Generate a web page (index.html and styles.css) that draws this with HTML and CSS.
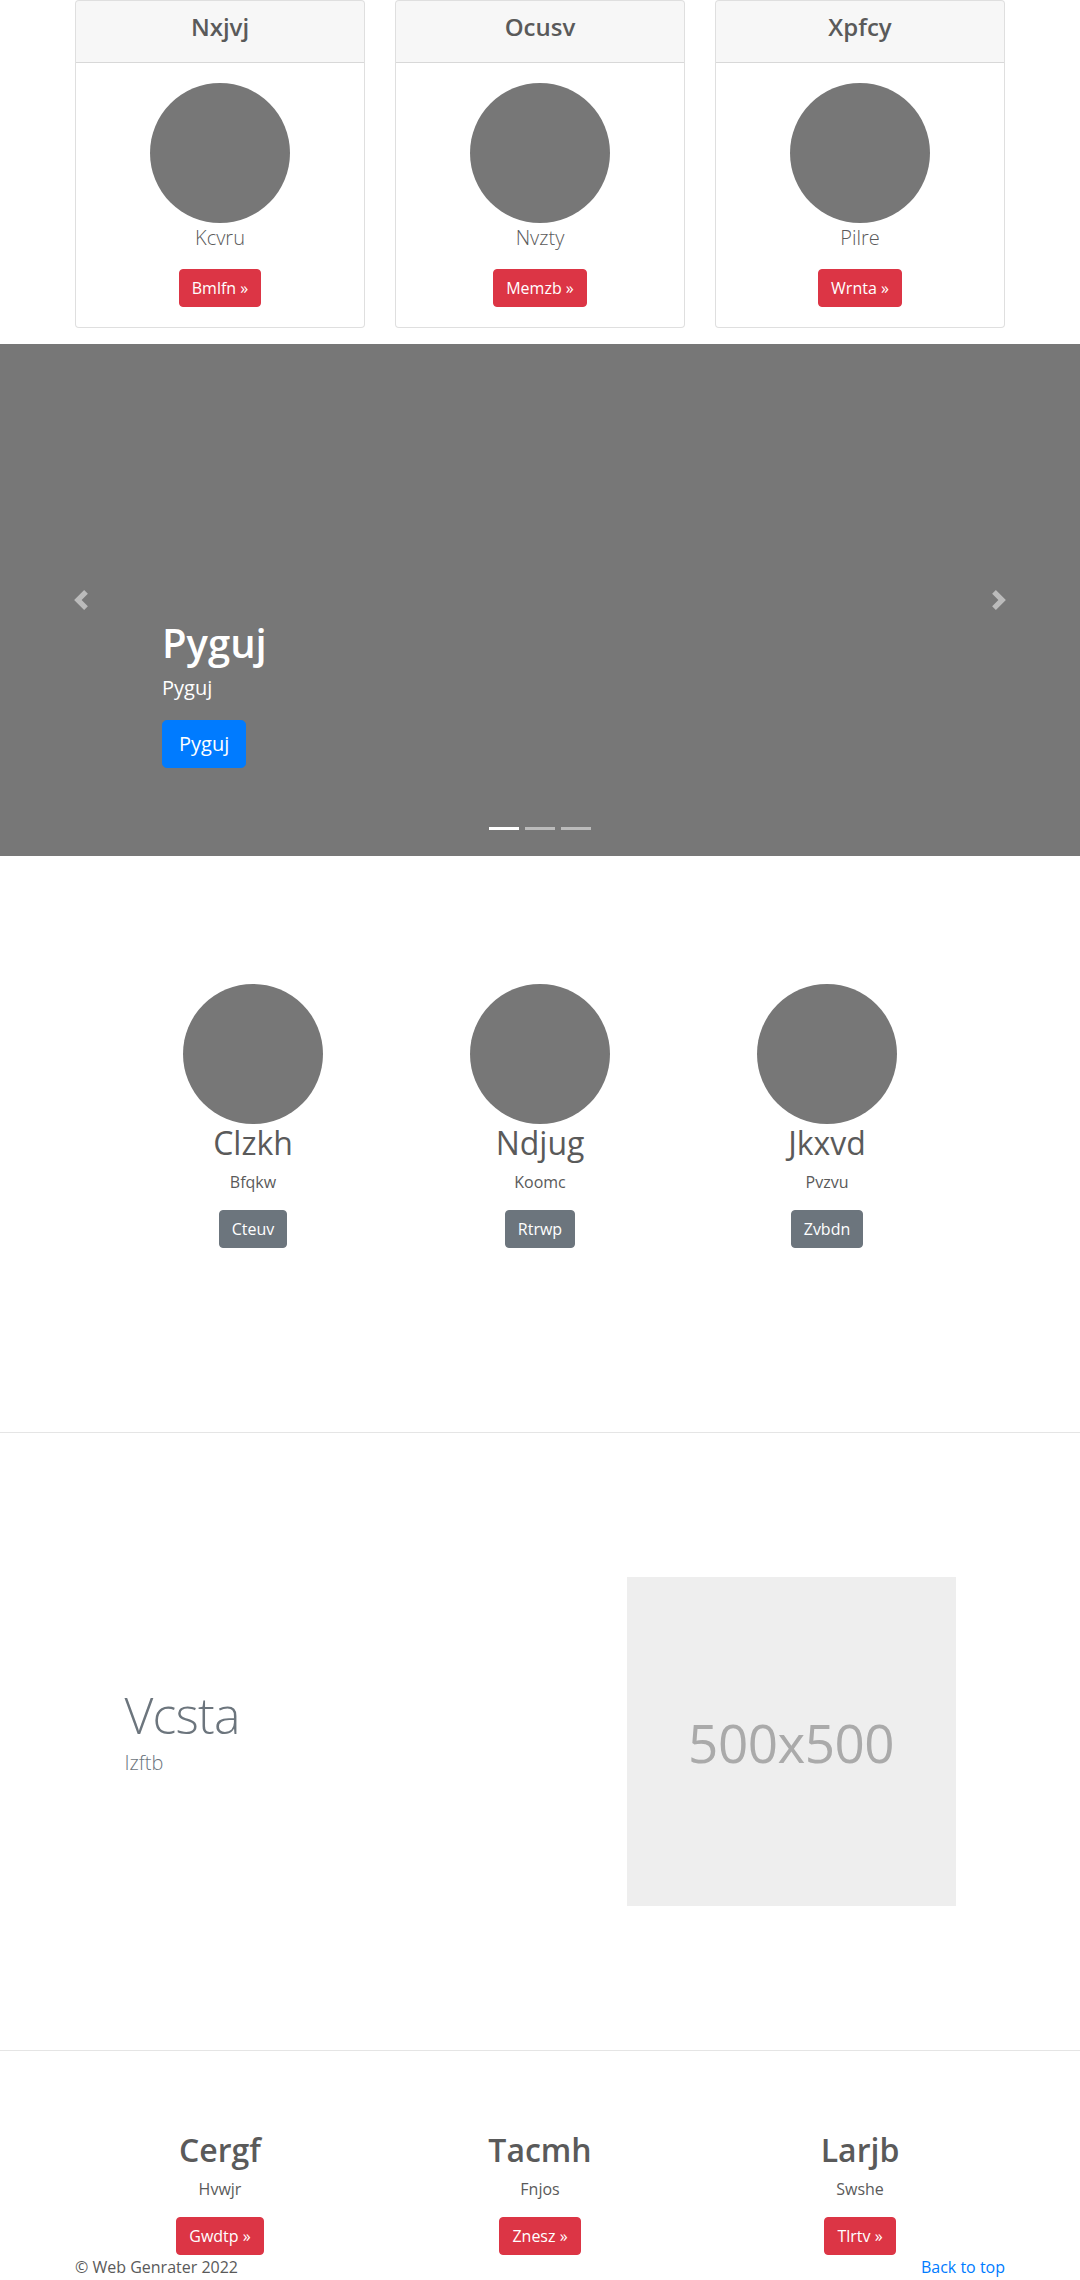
FILE: index.html
```html
<!DOCTYPE html>
<html lang="en">
<head>
<meta charset="utf-8">
<title>Page</title>
<link rel="stylesheet" href="styles.css">
</head>
<body>
<div class="container">
  <div class="row-three cards">
    <div class="card">
      <div class="card-header"><h4 class="card-title">Nxjvj</h4></div>
      <div class="card-body">
        <div class="circle"></div>
        <p class="lead">Kcvru</p>
        <a class="btn btn-danger" href="#">Bmlfn »</a>
      </div>
    </div>
    <div class="card">
      <div class="card-header"><h4 class="card-title">Ocusv</h4></div>
      <div class="card-body">
        <div class="circle"></div>
        <p class="lead">Nvzty</p>
        <a class="btn btn-danger" href="#">Memzb »</a>
      </div>
    </div>
    <div class="card">
      <div class="card-header"><h4 class="card-title">Xpfcy</h4></div>
      <div class="card-body">
        <div class="circle"></div>
        <p class="lead">Pilre</p>
        <a class="btn btn-danger" href="#">Wrnta »</a>
      </div>
    </div>
  </div>
</div>

<div class="carousel">
  <ol class="indicators">
    <li class="active"></li>
    <li></li>
    <li></li>
  </ol>
  <a class="control control-prev" href="#">
    <svg class="control-icon" viewBox="0 0 8 8" width="20" height="20"><path fill="#fff" d="M5.25 0l-4 4 4 4 1.5-1.5L4.25 4l2.5-2.5L5.25 0z"/></svg>
  </a>
  <a class="control control-next" href="#">
    <svg class="control-icon" viewBox="0 0 8 8" width="20" height="20"><path fill="#fff" d="M2.75 0l-1.5 1.5L3.75 4l-2.5 2.5L2.75 8l4-4-4-4z"/></svg>
  </a>
  <div class="caption">
    <h1 class="caption-title">Pyguj</h1>
    <p class="caption-text">Pyguj</p>
    <div class="caption-action"><a class="btn btn-lg btn-primary" href="#">Pyguj</a></div>
  </div>
</div>

<section class="marketing">
  <div class="mk-row">
    <div class="mk-col">
      <div class="circle"></div>
      <h2 class="mk-title">Clzkh</h2>
      <p class="mk-text">Bfqkw</p>
      <div class="mk-action"><a class="btn btn-secondary" href="#">Cteuv</a></div>
    </div>
    <div class="mk-col">
      <div class="circle"></div>
      <h2 class="mk-title">Ndjug</h2>
      <p class="mk-text">Koomc</p>
      <div class="mk-action"><a class="btn btn-secondary" href="#">Rtrwp</a></div>
    </div>
    <div class="mk-col">
      <div class="circle"></div>
      <h2 class="mk-title">Jkxvd</h2>
      <p class="mk-text">Pvzvu</p>
      <div class="mk-action"><a class="btn btn-secondary" href="#">Zvbdn</a></div>
    </div>
  </div>
</section>

<hr class="divider">

<section class="featurette">
  <div class="feat-row">
    <div class="feat-text">
      <h2 class="feat-heading">Vcsta</h2>
      <p class="lead muted">Izftb</p>
    </div>
    <div class="feat-media">
      <svg class="feat-img" viewBox="0 0 500 500" preserveAspectRatio="xMidYMid slice">
        <rect width="100%" height="100%" fill="#eee"/>
      </svg>
      <span class="feat-img-label">500x500</span>
    </div>
  </div>
</section>

<hr class="divider">

<section class="container">
  <div class="row-three bottom">
    <div class="b-col">
      <h2 class="b-title">Cergf</h2>
      <p class="b-text">Hvwjr</p>
      <a class="btn btn-danger" href="#">Gwdtp »</a>
    </div>
    <div class="b-col">
      <h2 class="b-title">Tacmh</h2>
      <p class="b-text">Fnjos</p>
      <a class="btn btn-danger" href="#">Znesz »</a>
    </div>
    <div class="b-col">
      <h2 class="b-title">Larjb</h2>
      <p class="b-text">Swshe</p>
      <a class="btn btn-danger" href="#">Tlrtv »</a>
    </div>
  </div>
</section>

<footer class="container footer">
  <p class="copy">© Web Genrater 2022</p>
  <p class="back"><a href="#">Back to top</a></p>
</footer>
</body>
</html>
```

FILE: styles.css
```css
* { box-sizing: border-box; }

html, body {
  margin: 0;
  padding: 0;
}

body {
  font-family: "Open Sans", "Noto Sans", "Liberation Sans", sans-serif;
  font-size: 16px;
  line-height: 1.5;
  color: #5a5a5a;
  background: #fff;
}

a { text-decoration: none; }

p { margin: 0; }

h1, h2, h4 { margin: 0; }

.container {
  width: 960px;
  margin: 0 auto;
  padding: 0 15px;
}

.row-three {
  display: grid;
  grid-template-columns: repeat(3, 1fr);
  column-gap: 30px;
}

/* ---------- cards ---------- */
.cards { margin-bottom: 16px; }

.card {
  border: 1px solid rgba(0, 0, 0, .125);
  border-radius: 4px;
  background: #fff;
  text-align: center;
}

.card-header {
  background: rgba(0, 0, 0, .03);
  border-bottom: 1px solid rgba(0, 0, 0, .125);
  padding: 12px 20px;
  border-radius: 3px 3px 0 0;
}

.card-title {
  font-size: 24px;
  line-height: 1.2;
  font-weight: 600;
  margin-bottom: 8px;
}

.card-body { padding: 20px; }

.circle {
  width: 140px;
  height: 140px;
  border-radius: 50%;
  background: #777;
  margin: 0 auto;
}

.lead {
  font-size: 20px;
  font-weight: 300;
  line-height: 1.5;
  margin-bottom: 16px;
}

.muted { color: #6c757d; }

/* ---------- buttons ---------- */
.btn {
  display: inline-block;
  vertical-align: top;
  font-size: 16px;
  line-height: 1.5;
  padding: 6px 12px;
  border: 1px solid transparent;
  border-radius: 4px;
  color: #fff;
  font-weight: 400;
}

.btn-danger { background: #dc3545; border-color: #dc3545; }
.btn-secondary { background: #6c757d; border-color: #6c757d; }
.btn-primary { background: #007bff; border-color: #007bff; }

.btn-lg {
  font-size: 20px;
  padding: 8px 16px;
  border-radius: 4.8px;
}

/* ---------- carousel ---------- */
.carousel {
  position: relative;
  height: 512px;
  background: #777;
  margin-bottom: 64px;
}

.indicators {
  position: absolute;
  left: 0;
  right: 0;
  bottom: 16px;
  margin: 0;
  padding: 0;
  list-style: none;
  display: flex;
  justify-content: center;
  z-index: 2;
}

.indicators li {
  width: 30px;
  height: 3px;
  margin: 10px 3px;
  background: #fff;
  opacity: .5;
}

.indicators li.active { opacity: 1; }

.control {
  position: absolute;
  top: 0;
  bottom: 0;
  width: 15%;
  display: flex;
  align-items: center;
  justify-content: center;
  z-index: 1;
}

.control-prev { left: 0; }
.control-next { right: 0; }

.control-icon { opacity: .5; display: block; }

.caption {
  position: absolute;
  left: 15%;
  right: 15%;
  bottom: 88px;
  color: #fff;
  text-align: left;
  z-index: 3;
}

.caption-title {
  font-size: 40px;
  line-height: 1.2;
  font-weight: 600;
  margin-bottom: 6px;
}

.caption-text {
  font-size: 20px;
  line-height: 1.5;
  margin-bottom: 17px;
}

/* ---------- marketing ---------- */
.marketing { padding: 64px 0; }

.mk-row {
  width: 861px;
  margin: 0 auto;
  display: grid;
  grid-template-columns: repeat(3, 1fr);
}

.mk-col {
  padding: 0 15px;
  margin-bottom: 24px;
  text-align: center;
}

.mk-title {
  font-size: 32px;
  line-height: 1.2;
  font-weight: 400;
  margin-bottom: 8px;
}

.mk-text { margin: 0 12px 16px; }

.mk-action { margin-bottom: 16px; }

/* ---------- divider ---------- */
.divider {
  margin: 80px 0;
  border: 0;
  border-top: 1px solid rgba(0, 0, 0, .1);
  height: 0;
}

/* ---------- featurette ---------- */
.featurette { padding: 64px 0; }

.feat-row {
  width: 861px;
  margin: 0 auto;
  display: grid;
  grid-template-columns: 7fr 5fr;
  align-items: center;
}

.feat-text { padding: 0 15px; }

.feat-heading {
  font-size: 50px;
  line-height: 1;
  font-weight: 300;
  letter-spacing: -0.8px;
  color: #6c757d;
  margin-bottom: 8px;
}

.feat-media {
  margin: 0 15px;
  position: relative;
  aspect-ratio: 1 / 1;
  background: #eee;
}

.feat-img {
  display: block;
  width: 100%;
  height: 100%;
}

.feat-img-label {
  position: absolute;
  left: 0;
  right: 0;
  top: 50%;
  transform: translateY(-50%);
  text-align: center;
  font-size: 53px;
  line-height: 1;
  letter-spacing: -0.5px;
  color: #aaa;
}

/* ---------- bottom columns ---------- */
.b-col { text-align: center; }

.b-title {
  font-size: 32px;
  line-height: 1.2;
  font-weight: 600;
  margin-bottom: 8px;
}

.b-text { margin-bottom: 16px; }

/* ---------- footer ---------- */
.footer {
  display: flex;
  justify-content: space-between;
}

.footer a { color: #007bff; }
```
